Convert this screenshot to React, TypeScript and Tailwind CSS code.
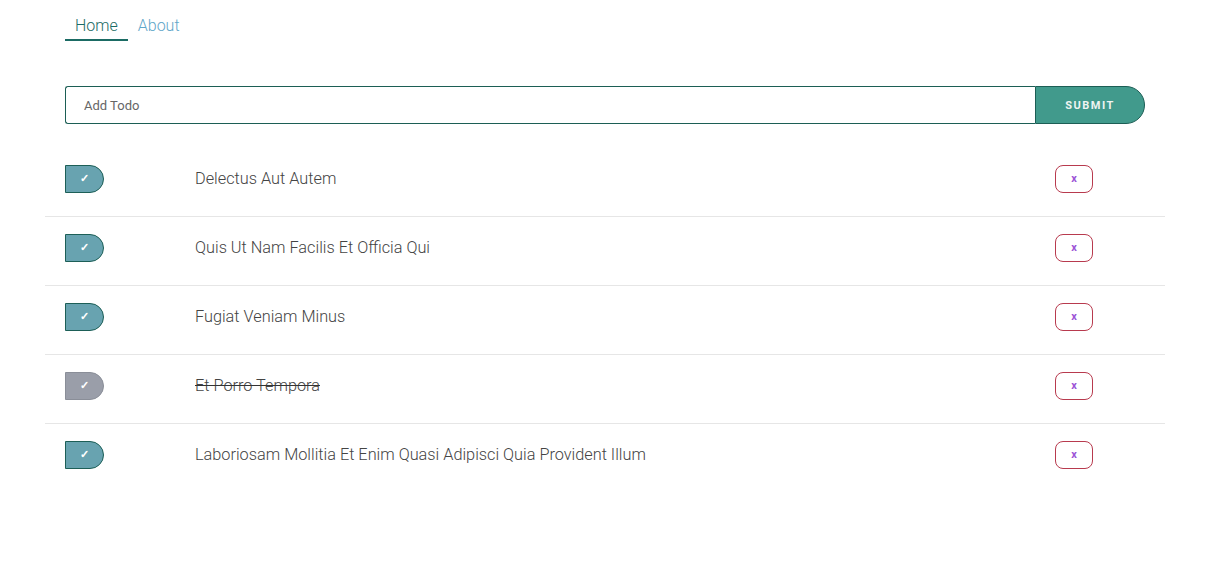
import { useState } from 'react'

type Todo = { id: number; title: string; completed: boolean }

const initialTodos: Todo[] = [
  { id: 1, title: 'Delectus Aut Autem', completed: false },
  { id: 2, title: 'Quis Ut Nam Facilis Et Officia Qui', completed: false },
  { id: 3, title: 'Fugiat Veniam Minus', completed: false },
  { id: 4, title: 'Et Porro Tempora', completed: true },
  { id: 5, title: 'Laboriosam Mollitia Et Enim Quasi Adipisci Quia Provident Illum', completed: false },
]

export default function App() {
  const [todos, setTodos] = useState<Todo[]>(initialTodos)
  const [title, setTitle] = useState('')

  const toggle = (id: number) =>
    setTodos(todos.map((t) => (t.id === id ? { ...t, completed: !t.completed } : t)))

  const remove = (id: number) => setTodos(todos.filter((t) => t.id !== id))

  const handleSubmit = (e: React.FormEvent) => {
    e.preventDefault()
    if (!title.trim()) return
    setTodos([...todos, { id: Date.now(), title, completed: false }])
    setTitle('')
  }

  return (
    <div className="min-h-screen bg-white font-['Roboto',sans-serif] px-[45px]">
      {/* nav */}
      <nav className="flex pl-5 pt-[12px]">
        <a className="px-2.5 pt-[2px] pb-[1px] text-[16px] font-light text-[#1b6b64] border-b-2 border-[#1b6b64] cursor-pointer">
          Home
        </a>
        <a className="px-2.5 pt-[2px] pb-[1px] text-[16px] font-light text-[#5fa6c9] cursor-pointer">
          About
        </a>
      </nav>

      {/* add todo */}
      <form onSubmit={handleSubmit} className="flex ml-5 mt-[45px] w-[1080px] h-[38px]">
        <input
          type="text"
          value={title}
          onChange={(e) => setTitle(e.target.value)}
          placeholder="Add Todo"
          className="flex-1 h-full pl-[18px] text-[13px] text-[#555] placeholder:text-[#666] border border-[#1c5e55] border-r-0 rounded-l-[3px] outline-none"
        />
        <button
          type="submit"
          className="w-[110px] h-full pt-[2px] bg-[#419a8c] border border-[#1c5e55] rounded-r-full text-[11px] font-bold tracking-[1.5px] text-[#eef4f2]"
        >
          SUBMIT
        </button>
      </form>

      {/* list */}
      <ul className="mt-[24px] w-[1120px]">
        {todos.map((todo, i) => (
          <li
            key={todo.id}
            className={`flex items-center px-5 pt-[17px] pb-[23px] ${
              i < todos.length - 1 ? 'border-b border-[#e6e6e6]' : ''
            }`}
          >
            <button
              onClick={() => toggle(todo.id)}
              className={`w-[39px] h-[28px] flex items-center justify-center rounded-r-full border text-[11px] font-bold text-white ${
                todo.completed
                  ? 'bg-[#9a9ea9] border-[#8a8e98]'
                  : 'bg-[#68a3b0] border-[#1d5f57]'
              }`}
            >
              ✓
            </button>
            <span
              className={`ml-[91px] flex-1 text-[16.3px] font-light text-[#444] ${
                todo.completed ? 'line-through decoration-[#333]' : ''
              }`}
            >
              {todo.title}
            </span>
            <button
              onClick={() => remove(todo.id)}
              className="mr-[52px] w-[38px] h-[28px] flex items-center justify-center rounded-[8px] border border-[#b83a4e] text-[11px] font-bold text-[#9b55d6]"
            >
              x
            </button>
          </li>
        ))}
      </ul>
    </div>
  )
}
